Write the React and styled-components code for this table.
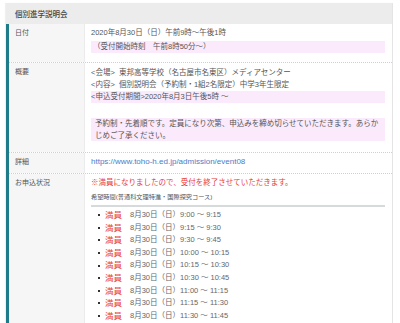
import React from "react";
import styled, { createGlobalStyle } from "styled-components";

const Global = createGlobalStyle`
  html, body { margin: 0; padding: 0; background: #ffffff; }
  body {
    font-family: "Liberation Sans", "Noto Sans CJK JP", sans-serif;
    color: #555;
    -webkit-font-smoothing: antialiased;
  }
`;

const Card = styled.section`
  margin: 3px 0 0 6px;
  width: 386px;
  border-right: 1px solid #e4e4e4;
  box-shadow: -1px 0 1px rgba(0, 0, 0, 0.06);
`;

const Header = styled.h2`
  margin: 0;
  height: 21px;
  padding-left: 9px;
  display: flex;
  align-items: center;
  background: #ececec;
  font-size: 7.5px;
  font-weight: 500;
  color: #444;
`;

const Table = styled.div`
  border-left: 3px solid #1e7c88;
`;

const Row = styled.div`
  display: grid;
  grid-template-columns: 76px 1fr;
  border-top: ${(p) => (p.$first ? "none" : "1px dotted #cfcfcf")};
`;

const Label = styled.div`
  background: #f6f6f6;
  border-right: 1px solid #ebebeb;
  padding: 3px 0 5px 6px;
  font-size: 7px;
  line-height: 12px;
  color: #555;
`;

const Cell = styled.div`
  padding: 3px 7px 5px 6px;
  font-size: 7.5px;
  line-height: 12px;
  color: #555;
`;

const Para = styled.p`
  margin: ${(p) => p.$top || 0}px 0 ${(p) => p.$gap ?? 5}px;
`;

const Highlight = styled.span`
  display: block;
  background: #fbeafc;
  margin-top: ${(p) => p.$top || 0}px;
  padding-left: ${(p) => p.$indent || 0}px;
  line-height: ${(p) => p.$lh || 12}px;
`;

const Link = styled.a`
  display: block;
  color: #4a7cc9;
  font-size: 8px;
  line-height: 12px;
  text-decoration: none;
`;

const Notice = styled.p`
  margin: 0;
  color: #e83a36;
  font-size: 7.5px;
`;

const SubTitle = styled.p`
  margin: 3px 0 0;
  font-size: 6.2px;
  line-height: 10px;
  color: #555;
  padding-bottom: 3px;
  border-bottom: 2px solid #d6dada;
`;

const SlotList = styled.ul`
  list-style: none;
  margin: 2px 0 0;
  padding: 0 0 0 7px;
`;

const Slot = styled.li`
  display: flex;
  align-items: center;
  height: 12.6px;
  line-height: 12.6px;
  &::before {
    content: "";
    width: 2px;
    height: 2px;
    background: #333;
    margin-right: 5px;
  }
`;

const Full = styled.span`
  color: #e8403a;
  font-size: 8.5px;
  margin-right: 8px;
`;

const SlotTime = styled.span`
  color: #666;
`;

const slots = [
  "9:00 〜 9:15",
  "9:15 〜 9:30",
  "9:30 〜 9:45",
  "10:00 〜 10:15",
  "10:15 〜 10:30",
  "10:30 〜 10:45",
  "11:00 〜 11:15",
  "11:15 〜 11:30",
  "11:30 〜 11:45",
  "11:45 〜 12:00",
];

export default function App() {
  return (
    <>
      <Global />
      <Card>
        <Header>個別進学説明会</Header>
        <Table>
          <Row $first>
            <Label>日付</Label>
            <Cell>
              <Para $gap={4}>
                2020年8月30日（日）午前9時〜午後1時
                <Highlight $top={2} $indent={2}>（受付開始時刻　午前8時50分〜）</Highlight>
              </Para>
            </Cell>
          </Row>
          <Row>
            <Label>概要</Label>
            <Cell>
              <Para $top={1} $gap={15}>
                &lt;会場&gt;&nbsp;&nbsp;東邦高等学校（名古屋市名東区）メディアセンター
                <br />
                &lt;内容&gt;&nbsp;&nbsp;個別説明会（予約制・1組2名限定）中学3年生限定
                <Highlight>&lt;申込受付期間&gt;2020年8月3日午後5時 〜</Highlight>
              </Para>
              <Para $gap={6}>
                <Highlight $indent={4} $lh={11.5}>
                  予約制・先着順です。定員になり次第、申込みを締め切らせていただきます。あらかじめご了承ください。
                </Highlight>
              </Para>
            </Cell>
          </Row>
          <Row>
            <Label>詳細</Label>
            <Cell>
              <Link href="#">https://www.toho-h.ed.jp/admission/event08</Link>
            </Cell>
          </Row>
          <Row>
            <Label>お申込状況</Label>
            <Cell>
              <Notice>※満員になりましたので、受付を終了させていただきます。</Notice>
              <SubTitle>希望時間(普通科文理特進・国際探究コース)</SubTitle>
              <SlotList>
                {slots.map((s) => (
                  <Slot key={s}>
                    <Full>満員</Full>
                    <SlotTime>8月30日（日）{s}</SlotTime>
                  </Slot>
                ))}
              </SlotList>
            </Cell>
          </Row>
        </Table>
      </Card>
    </>
  );
}
